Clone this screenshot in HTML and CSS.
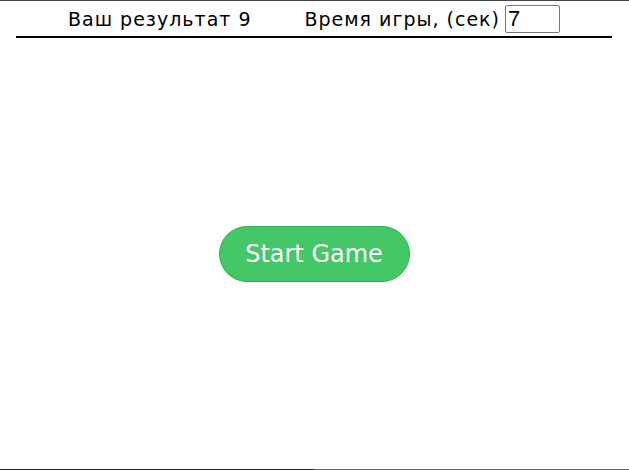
FILE: index.html
```html
<!DOCTYPE html>
<html lang="ru">
<head>
<meta charset="utf-8">
<title>Game</title>
<link rel="stylesheet" href="styles.css">
</head>
<body>
<div class="page">
  <header class="header">
    <span class="result">Ваш результат 9</span>
    <label class="time">Время игры, (сек) <input class="time-input" type="number" value="7"></label>
  </header>
  <main class="field">
    <button class="start">Start Game</button>
  </main>
</div>
</body>
</html>
```
FILE: styles.css
```css
html {
  height: 100%;
  background-color: #fff;
  background-image: linear-gradient(to right, #222 0, #222 50%, #666 50%, #666 100%);
  background-size: 100% 1px;
  background-position: left bottom;
  background-repeat: no-repeat;
}
html, body {
  margin: 0;
  padding: 0;
}
body {
  height: 100%;
  font-family: "DejaVu Sans", "Open Sans", sans-serif;
  color: #000;
  border-top: 1px solid #444;
  box-sizing: border-box;
}
.page {
  height: 100%;
  display: flex;
  flex-direction: column;
  padding: 0 17px 0 16px;
  box-sizing: border-box;
}
.header {
  display: flex;
  justify-content: center;
  align-items: center;
  gap: 53px;
  height: 37px;
  box-sizing: border-box;
  border-bottom: 2px solid #000;
  font-size: 19px;
  letter-spacing: 1px;
  padding-top: 1px;
}
.time {
  display: flex;
  align-items: center;
  gap: 5px;
}
.time-input {
  width: 55px;
  height: 28px;
  box-sizing: border-box;
  border: 1px solid #767676;
  border-radius: 2px;
  font-family: "Liberation Sans", Arial, sans-serif;
  font-size: 22px;
  letter-spacing: 0;
  padding: 0 2px;
  -moz-appearance: textfield;
}
.time-input::-webkit-outer-spin-button,
.time-input::-webkit-inner-spin-button {
  -webkit-appearance: none;
  margin: 0;
}
.field {
  flex: 1;
  display: flex;
  align-items: center;
  justify-content: center;
}
.start {
  width: 191px;
  height: 56px;
  border-radius: 28px;
  background: #44c767;
  border: 1px solid #2fb04d;
  color: #fff;
  font-family: "DejaVu Sans", "Open Sans", sans-serif;
  font-size: 24px;
  cursor: pointer;
}
```
